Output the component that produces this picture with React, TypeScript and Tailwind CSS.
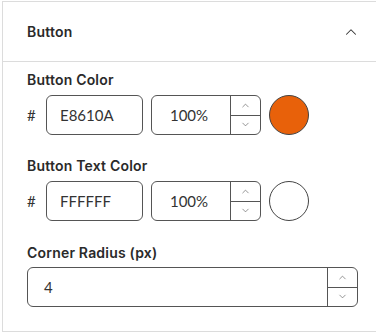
import { ChevronDown, ChevronUp } from 'lucide-react'

const Stepper = () => (
  <div className="flex flex-col w-[30px] border-l border-[#555] h-full">
    <div className="flex-1 flex items-center justify-center border-b border-[#555]">
      <ChevronUp className="w-[11px] h-[11px] text-[#666]" strokeWidth={1.5} />
    </div>
    <div className="flex-1 flex items-center justify-center">
      <ChevronDown className="w-[11px] h-[11px] text-[#666]" strokeWidth={1.5} />
    </div>
  </div>
)

const ColorRow = ({ hex, swatch }: { hex: string; swatch: string }) => (
  <div className="flex items-center h-[40px]">
    <span className="w-[19px] text-[15px] text-[#333]">#</span>
    <div className="w-[97px] h-full rounded-[6px] border border-[#555] flex items-center pl-[13px] text-[15px] text-[#333]">
      {hex}
    </div>
    <div className="ml-[8px] w-[110px] h-full rounded-[6px] border border-[#555] flex overflow-hidden">
      <div className="flex-1 flex items-center justify-center text-[15px] text-[#333] pr-[4px]">100%</div>
      <Stepper />
    </div>
    <div
      className="ml-[8px] w-[40px] h-[40px] rounded-full border border-[#444]"
      style={{ backgroundColor: swatch }}
    />
  </div>
)

const Label = ({ children, className = '' }: { children: string; className?: string }) => (
  <div
    className={`text-[14px] font-semibold text-[#2a2a2a] leading-[16px] tracking-[0.2px] ${className}`}
    style={{ fontFamily: 'Inter, sans-serif' }}
  >
    {children}
  </div>
)

export default function App() {
  return (
    <div className="w-[376px] h-[336px] bg-white pt-px pl-[2px]" style={{ fontFamily: 'Lato, "Noto Sans", sans-serif' }}>
      <div className="border-l border-t border-b border-[#dcdcdc]">
        {/* Header */}
        <div className="h-[60px] flex items-center justify-between pl-[24px] pr-[16px] border-b border-[#dcdcdc]">
          <Label>Button</Label>
          <ChevronUp className="w-[18px] h-[18px] text-[#333]" strokeWidth={1.4} />
        </div>

        {/* Body */}
        <div className="pl-[24px] pr-[18px] pt-[10px] pb-[24px]">
          <Label>Button Color</Label>
          <div className="mt-[7px]">
            <ColorRow hex="E8610A" swatch="#e8610a" />
          </div>

          <Label className="mt-[23px]">Button Text Color</Label>
          <div className="mt-[7px]">
            <ColorRow hex="FFFFFF" swatch="#ffffff" />
          </div>

          <Label className="mt-[24px]">Corner Radius (px)</Label>
          <div className="mt-[6px] h-[40px] w-[331px] rounded-[6px] border border-[#555] flex overflow-hidden">
            <div className="flex-1 flex items-center pl-[16px] text-[15px] text-[#333]">4</div>
            <Stepper />
          </div>
        </div>
      </div>
    </div>
  )
}
